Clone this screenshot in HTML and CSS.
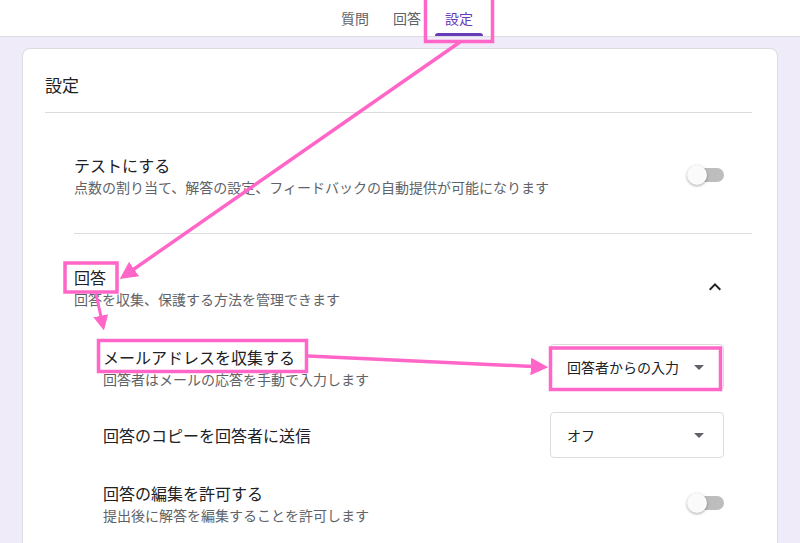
FILE: index.html
```html
<!DOCTYPE html>
<html lang="ja">
<head>
  <meta charset="UTF-8">
  <title>設定</title>
  <link rel="stylesheet" href="styles.css">
</head>
<body>

  <div class="top-bar">
    <div class="tab">質問</div>
    <div class="tab">回答</div>
    <div class="tab active">設定</div>
  </div>

  <div class="settings-card">
    <div class="card-title">設定</div>

    <div class="section">
      <div class="row">
        <div>
          <div class="item-title">テストにする</div>
          <div class="item-desc">点数の割り当て、解答の設定、フィードバックの自動提供が可能になります</div>
        </div>
        <div class="toggle"><span class="knob"></span></div>
      </div>
    </div>

    <div class="section responses">
      <div class="row">
        <div>
          <div class="item-title">回答</div>
          <div class="item-desc">回答を収集、保護する方法を管理できます</div>
        </div>
        <svg class="chevron" width="24" height="24" viewBox="0 0 24 24"><path d="M7.41 15.41L12 10.83l4.59 4.58L18 14l-6-6-6 6z" fill="#202124"/></svg>
      </div>

      <div class="sub-list">
        <div class="sub-row">
          <div>
            <div class="item-title">メールアドレスを収集する</div>
            <div class="item-desc">回答者はメールの応答を手動で入力します</div>
          </div>
          <div class="dropdown">回答者からの入力<span class="caret"></span></div>
        </div>
        <div class="sub-row">
          <div class="item-title">回答のコピーを回答者に送信</div>
          <div class="dropdown">オフ<span class="caret"></span></div>
        </div>
        <div class="sub-row">
          <div>
            <div class="item-title">回答の編集を許可する</div>
            <div class="item-desc">提出後に解答を編集することを許可します</div>
          </div>
          <div class="toggle"><span class="knob"></span></div>
        </div>
      </div>
    </div>
  </div>

  <!-- pink annotations drawn over the screenshot -->
  <svg class="notes" viewBox="0 0 800 543" width="800" height="543">
    <defs>
      <marker id="head" markerWidth="5" markerHeight="5" refX="3.5" refY="2.5" orient="auto" markerUnits="strokeWidth">
        <path d="M0,0 L5,2.5 L0,5 z" fill="#ff66c8"/>
      </marker>
    </defs>
    <g fill="none" stroke="#ff66c8" stroke-width="3.5">
      <rect x="425.5" y="-5" width="67" height="46.5"/>
      <rect x="65" y="263" width="52" height="29"/>
      <rect x="98.5" y="340.5" width="208" height="31"/>
      <rect x="550.5" y="348" width="170" height="41.5"/>
      <line x1="460" y1="42" x2="124" y2="276" marker-end="url(#head)"/>
      <line x1="96" y1="294" x2="103" y2="326" stroke-width="3" marker-end="url(#head)"/>
      <line x1="308" y1="356" x2="543" y2="367" marker-end="url(#head)"/>
    </g>
  </svg>

</body>
</html>
```

FILE: styles.css
```css
html {
  overflow: hidden;
}

body {
  position: relative;
  margin: 0;
  background-color: #f0ebf8;
  font-family: "Noto Sans CJK JP", "Liberation Sans", sans-serif;
  color: #202124;
}

/* tabs at the top */
.top-bar {
  display: flex;
  justify-content: center;
  gap: 4px;
  height: 36px;
  padding-left: 14px;
  background-color: #fff;
  border-bottom: 1px solid #dadce0;
}

.tab {
  position: relative;
  padding: 0 10px;
  font-size: 14px;
  line-height: 36px;
  color: #5f6368;
}

.tab.active {
  color: #673ab7;
}

.tab.active::after {
  content: "";
  position: absolute;
  left: 0;
  right: 0;
  bottom: 0;
  height: 3px;
  border-radius: 3px 3px 0 0;
  background-color: #673ab7;
}

/* settings card */
.settings-card {
  margin: 11px 22px 0 22px;
  padding: 24px 25px 40px 22px;
  background-color: #fff;
  border: 1px solid #dadce0;
  border-radius: 8px;
}

.card-title {
  font-size: 17px;
  line-height: 24px;
  padding-bottom: 15px;
  border-bottom: 1px solid #dadce0;
}

.section {
  margin-left: 29px;
  padding: 40px 28px 36px 0;
  border-bottom: 1px solid #dadce0;
}

.section.responses {
  padding-top: 31px;
  border-bottom: none;
}

.row {
  display: flex;
  justify-content: space-between;
  align-items: center;
}

.item-title {
  font-size: 16px;
  line-height: 24px;
}

.item-desc {
  font-size: 14px;
  line-height: 20px;
  color: #5f6368;
}

.chevron {
  margin-right: -3px;
}

.sub-list {
  display: flex;
  flex-direction: column;
  gap: 22px;
  margin-top: 35px;
  padding-left: 29px;
}

.sub-row {
  display: flex;
  justify-content: space-between;
  align-items: center;
  min-height: 46px;
}

/* select box */
.dropdown {
  display: flex;
  justify-content: space-between;
  align-items: center;
  box-sizing: border-box;
  width: 174px;
  height: 46px;
  padding: 0 19px 0 16px;
  border: 1px solid #dadce0;
  border-radius: 4px;
  font-size: 14px;
}

.caret {
  width: 0;
  height: 0;
  border-left: 5px solid transparent;
  border-right: 5px solid transparent;
  border-top: 5px solid #5f6368;
}

/* switch, off state */
.toggle {
  position: relative;
  width: 37px;
  height: 20px;
}

.toggle::before {
  content: "";
  position: absolute;
  left: 3px;
  right: 0;
  top: 3px;
  height: 14px;
  border-radius: 7px;
  background-color: #bdbdbd;
}

.knob {
  position: absolute;
  left: 0;
  top: 0;
  width: 20px;
  height: 20px;
  border-radius: 50%;
  background-color: #fafafa;
  box-shadow: 0 1px 3px rgba(0, 0, 0, 0.35);
}

.notes {
  position: absolute;
  top: 0;
  left: 0;
  pointer-events: none;
}
```
